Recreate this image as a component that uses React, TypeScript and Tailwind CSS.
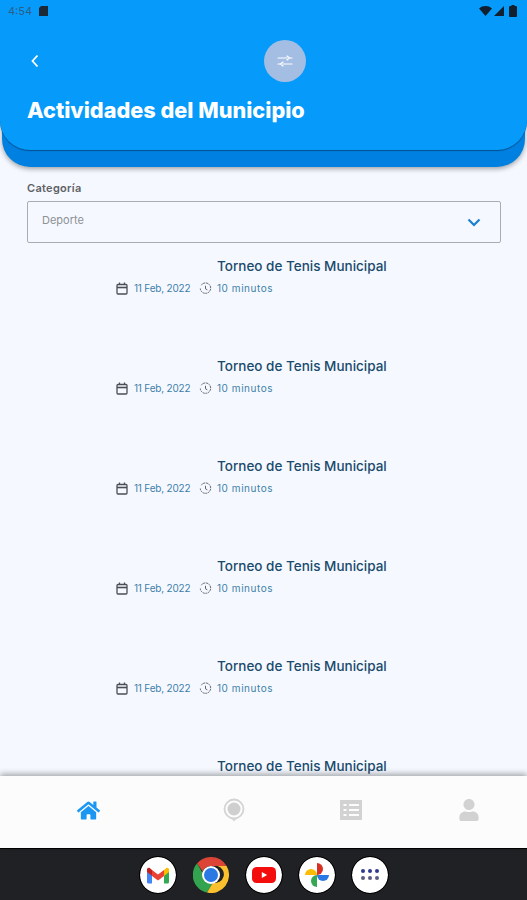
import React from "react";
import { FaHome, FaUser } from "react-icons/fa";

const font = { fontFamily: "Inter, sans-serif" };

function FilterIcon() {
  return (
    <svg width="16" height="14" viewBox="0 0 16 14" fill="none" stroke="white" strokeWidth="1.2" strokeLinecap="round">
      <path d="M1 4h9M13 4h2" />
      <path d="M10 2l2.5 2L10 6" />
      <path d="M1 10h2M6 10h9" />
      <path d="M6 8l-2.5 2L6 12" />
    </svg>
  );
}

function CalendarIcon() {
  return (
    <svg width="12" height="13" viewBox="0 0 12 13" fill="none" stroke="#4b4f55" strokeWidth="1.3">
      <rect x="1" y="2.5" width="10" height="9.5" rx="1" />
      <path d="M1 5.5h10" strokeWidth="1.6" />
      <path d="M3.5 0.5v2.5M8.5 0.5v2.5" />
    </svg>
  );
}

function ClockIcon() {
  return (
    <svg width="13" height="13" viewBox="0 0 13 13" fill="none" stroke="#5d6268" strokeWidth="1">
      <path d="M2.2 3.2A5.2 5.2 0 1 1 1.3 6.5" strokeDasharray="2 0.7" />
      <path d="M6.5 3.8v3l1.8 1" />
    </svg>
  );
}

function Activity({ last }: { last?: boolean }) {
  return (
    <div className="h-[100px] shrink-0">
      <p className="ml-[217px] text-[13.5px] leading-[20px] font-medium text-[#1b4a6c] whitespace-nowrap">
        Torneo de Tenis Municipal
      </p>
      {!last && (
        <div className="ml-[116px] mt-[5px] flex items-center text-[10px] leading-[14px] text-[#3f7fa8] whitespace-nowrap">
          <CalendarIcon />
          <span className="ml-[6px] w-[65px] tracking-[-0.2px]">11 Feb, 2022</span>
          <ClockIcon />
          <span className="ml-[5px] tracking-[0.55px]">10 minutos</span>
        </div>
      )}
    </div>
  );
}

function Gmail() {
  return (
    <svg width="24" height="19" viewBox="0 0 24 19">
      <path d="M1 6v11a1.5 1.5 0 0 0 1.5 1.5H6V8z" fill="#4285f4" />
      <path d="M18 8v10.5h3.5A1.5 1.5 0 0 0 23 17V6z" fill="#34a853" />
      <path d="M1 3v4l5 3.8V5L4 3.2C2.8 2.2 1 3 1 4.5z" fill="#c5221f" />
      <path d="M6 5v6l6 4.5 6-4.5V5l-6 4.5z" fill="#ea4335" />
      <path d="M18 5v6l5-4V4.5c0-1.5-1.8-2.3-3-1.3z" fill="#fbbc04" />
    </svg>
  );
}

function Chrome() {
  return (
    <svg width="36" height="36" viewBox="0 0 36 36">
      <path d="M18 0a18 18 0 0 1 15.6 9H18a9 9 0 0 0-8.3 5.5L4 6.4A18 18 0 0 1 18 0z" fill="#db4437" />
      <path d="M4 6.4l6 10.2a8.5 8.5 0 0 0 9.5 9.7L14 35.6A18 18 0 0 1 4 6.4z" fill="#34a34f" />
      <path d="M33.6 9A18 18 0 0 1 14 35.6l6-10a8.5 8.5 0 0 0 4.5-16.6z" fill="#fbc02d" />
      <circle cx="18" cy="18" r="9" fill="white" />
      <circle cx="18" cy="18" r="7" fill="#2a78e4" />
    </svg>
  );
}

function Youtube() {
  return (
    <svg width="24" height="18" viewBox="0 0 24 18">
      <rect x="0" y="1" width="24" height="16" rx="4.5" fill="#f40d0d" />
      <path d="M9.8 6l5.4 3-5.4 3z" fill="white" />
    </svg>
  );
}

function Photos() {
  return (
    <svg width="26" height="26" viewBox="0 0 26 26">
      <path d="M13 13V1a6 6 0 0 1 0 12z" fill="#d93025" />
      <path d="M13 13h12a6 6 0 0 1-12 0z" fill="#2a78e4" />
      <path d="M13 13v12a6 6 0 0 1 0-12z" fill="#34a853" />
      <path d="M13 13H1a6 6 0 0 1 12 0z" fill="#fbbc04" />
    </svg>
  );
}

function Apps() {
  return (
    <div className="grid grid-cols-3 gap-x-[3px] gap-y-[3px]">
      {["#2f3a8f", "#2f3a8f", "#2f3a8f", "#5a5e80", "#5a5e80", "#5a5e80"].map((c, i) => (
        <span key={i} className="w-[4px] h-[4px] rounded-full" style={{ backgroundColor: c }} />
      ))}
    </div>
  );
}

export default function App() {
  return (
    <div className="w-[527px] h-[900px] flex flex-col overflow-hidden bg-[#f5f9ff]" style={font}>
      {/* Header */}
      <header className="relative z-10 h-[150px] shrink-0 rounded-b-[30px] bg-[#069bfb] shadow-[0_1px_1px_#00508f,0_19px_0_-2px_#0080e0,0_21px_5px_-2px_rgba(0,0,0,0.35)]">
        <div className="h-[22px] px-[8px] flex items-center justify-between">
          <div className="flex items-center gap-[7px]">
            <span className="text-[11px] text-[#2b5f86]">4:54</span>
            <svg width="9" height="10" viewBox="0 0 9 10" fill="#1c2a38">
              <path d="M2 0h7v10H0V2z" />
            </svg>
          </div>
          <div className="flex items-center gap-[2px] mr-[2px]">
            <svg width="13" height="10" viewBox="0 0 13 10" fill="#10202e">
              <path d="M0 2.5C3.5-.8 9.500-.8 13 2.5L6.500 10z" />
            </svg>
            <svg width="10" height="10" viewBox="0 0 10 10" fill="#10202e">
              <path d="M10 0v10H0z" />
            </svg>
            <svg width="8" height="12" viewBox="0 0 8 12" fill="#10202e" className="ml-[3px]">
              <path d="M2.500 0h3v1H7a1 1 0 0 1 1 1v9a1 1 0 0 1-1 1H1a1 1 0 0 1-1-1V2a1 1 0 0 1 1-1h1.500z" />
            </svg>
          </div>
        </div>
        <div className="mt-[18px] h-[42px] flex items-center pl-[30px]">
          <svg width="10" height="14" viewBox="0 0 10 14" fill="none" stroke="white" strokeWidth="1.8">
            <path d="M7.500 1.500L2.500 7l5 5.500" />
          </svg>
          <div className="ml-[224px] w-[42px] h-[42px] rounded-full bg-[#a3bde3] flex items-center justify-center">
            <FilterIcon />
          </div>
        </div>
        <h1 className="ml-[27px] mt-[13px] text-[21.7px] leading-[30px] font-extrabold text-white whitespace-nowrap">
          Actividades del Municipio
        </h1>
      </header>

      {/* Content */}
      <main className="flex-1 min-h-0 overflow-hidden pt-[31px] px-[27px]">
        <label className="block text-[11px] leading-[14px] font-semibold tracking-[0.3px] text-[#5e6165]">Categoría</label>
        <div className="mt-[6px] w-[474px] h-[42px] border border-[#a9adb2] rounded-[2px] flex items-center justify-between pl-[14px] pr-[19px]">
          <span className="text-[11px] text-[#8d9094] -mt-[4px]">Deporte</span>
          <svg width="14" height="9" viewBox="0 0 14 9" fill="none" stroke="#1a7fd0" strokeWidth="2.2">
            <path d="M1.500 1.500L7 7l5.500-5.500" />
          </svg>
        </div>
        <div className="-mx-[27px] mt-[13px] flex flex-col">
          {[0, 1, 2, 3, 4, 5].map((i) => (
            <Activity key={i} last={i === 5} />
          ))}
        </div>
      </main>

      {/* Bottom nav */}
      <nav className="relative h-[72px] shrink-0 bg-[#fcfcfc] shadow-[0_-2px_6px_rgba(0,0,0,0.35)] flex items-center pl-[76px] gap-x-[93px] pb-[4px]">
        <div className="w-[24px] flex justify-center">
          <FaHome size={23} color="#1b96f3" />
        </div>
        <div className="ml-[29px] w-[24px] flex justify-center">
          <svg width="22" height="24" viewBox="0 0 22 24">
            <circle cx="11" cy="11" r="9.500" fill="none" stroke="#d4d4d4" strokeWidth="1.800" />
            <circle cx="11" cy="11" r="6.500" fill="#cfcfcf" />
            <path d="M8 20l3 3.500 3-3.500z" fill="#d4d4d4" />
          </svg>
        </div>
        <div className="w-[24px] flex justify-center">
          <svg width="22" height="20" viewBox="0 0 22 20">
            <rect width="22" height="20" fill="#d2d2d2" />
            <path d="M3.500 5h3M9 5h10M3.500 10h3M9 10h10M3.500 15h3M9 15h10" stroke="#fcfcfc" strokeWidth="1.800" />
          </svg>
        </div>
        <div className="ml-[1px] w-[24px] flex justify-center">
          <FaUser size={22} color="#d2d2d2" />
        </div>
      </nav>

      {/* Android nav bar */}
      <div className="h-[52px] shrink-0 bg-[#202124] flex items-center justify-center gap-[17px] border-t border-black">
        <div className="w-[36px] h-[36px] rounded-full bg-white flex items-center justify-center outline-[1.5px] outline-black"><Gmail /></div>
        <div className="w-[36px] h-[36px] rounded-full flex items-center justify-center"><Chrome /></div>
        <div className="w-[36px] h-[36px] rounded-full bg-white flex items-center justify-center outline-[1.5px] outline-black"><Youtube /></div>
        <div className="w-[36px] h-[36px] rounded-full bg-white flex items-center justify-center outline-[1.5px] outline-black"><Photos /></div>
        <div className="w-[36px] h-[36px] rounded-full bg-white flex items-center justify-center outline-[1.5px] outline-black"><Apps /></div>
      </div>
    </div>
  );
}
